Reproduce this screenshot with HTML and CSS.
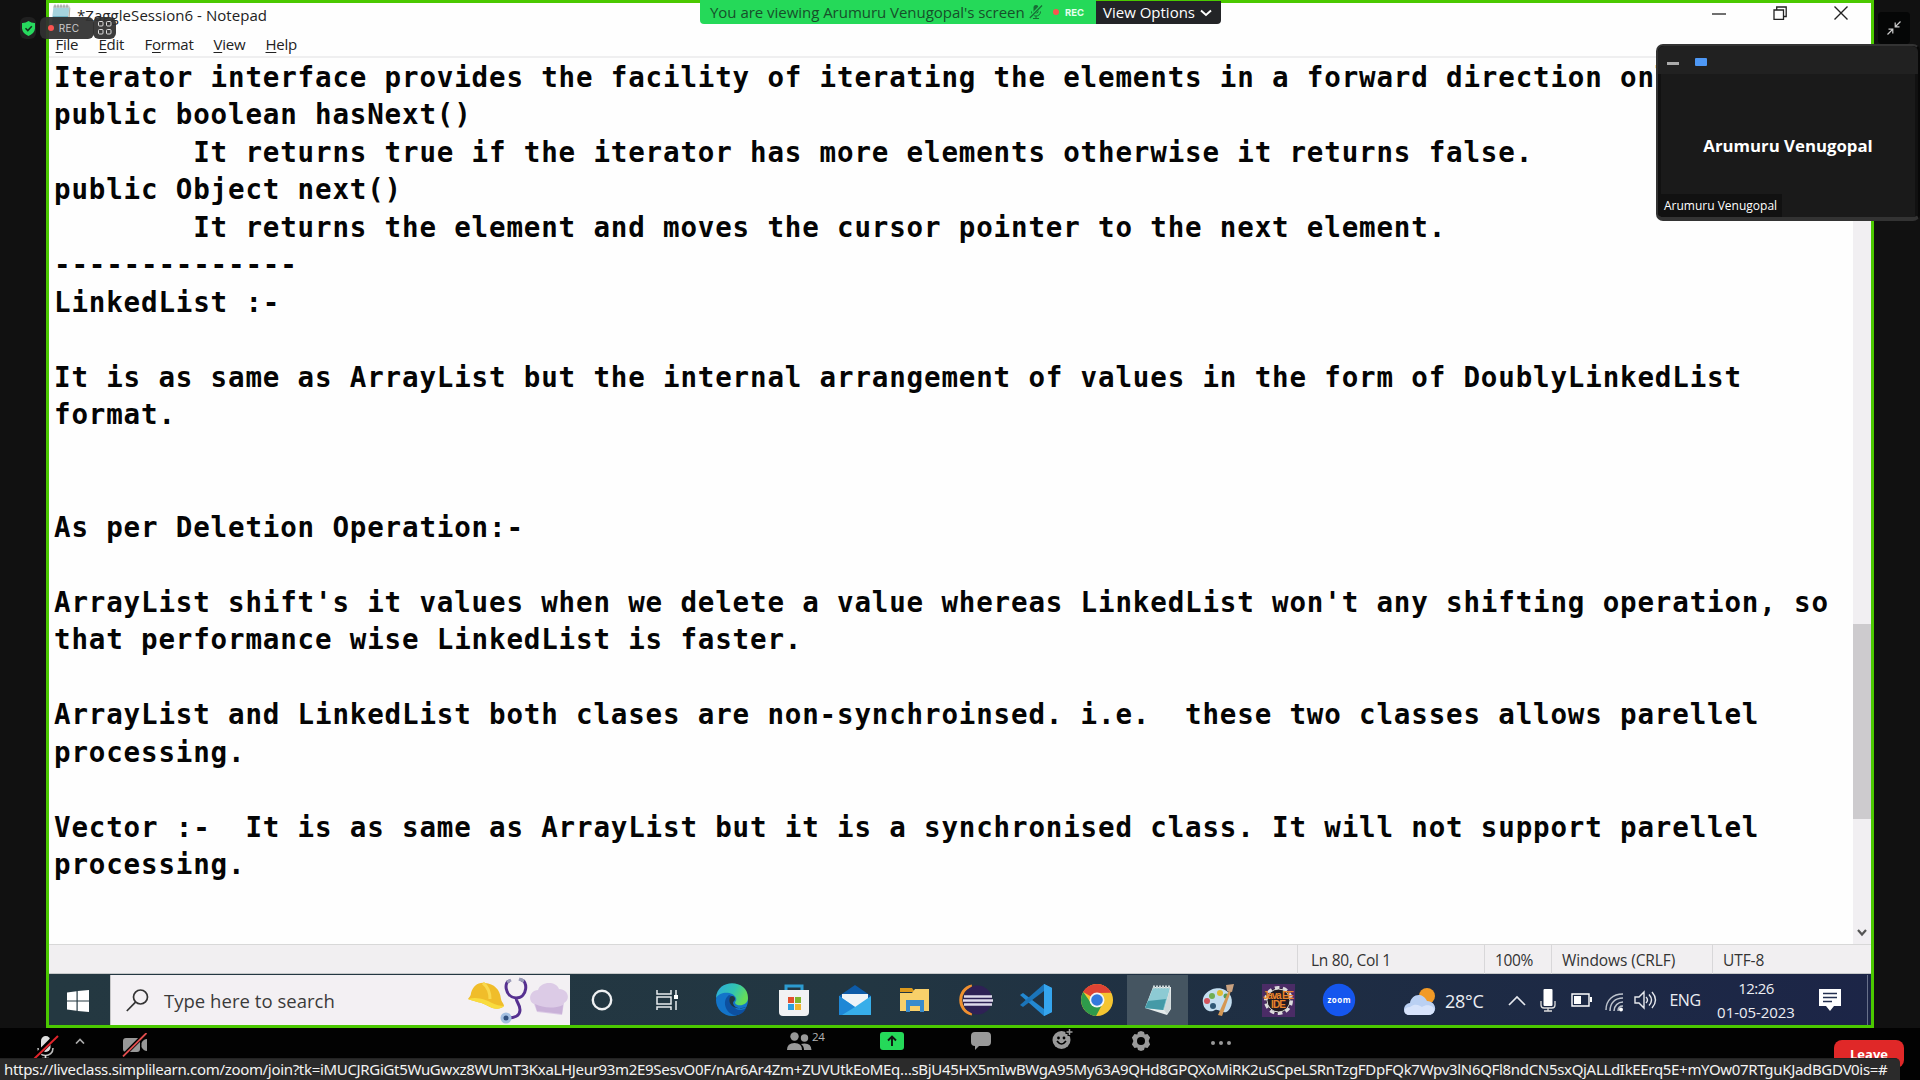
FILE: index.html
```html
<!DOCTYPE html>
<html lang="en">
<head>
<meta charset="utf-8">
<title>Shared screen</title>
<link rel="stylesheet" href="styles.css">
</head>
<body>
<div class="app">
  <main class="stage">
    <section class="share">
      <header class="titlebar">
        <svg class="doc-icon" width="20" height="20" viewBox="0 0 20 20"><path d="M2.500 2.500h16L16.500 20H.5z" fill="#a5d3dd"/><path d="M2 12h15l-.5 8H1z" fill="#6fb3c3"/><path d="M2.500 1.500h16l-.3 2.500h-16z" fill="#c9cfcf"/><path d="M4 .5v3M7 .5v3M10 .5v3M13 .5v3M16 .5v3" stroke="#8b8f90" stroke-width="1"/><path d="M18.500 3l.8 1-1 16h-1.800z" fill="#b9b0a0"/></svg>
        <span class="title">*ZaggleSession6 - Notepad</span>
        <div class="win-buttons">
          <svg width="14" height="14" viewBox="0 0 14 14"><path d="M0 8h14" stroke="#333" stroke-width="1.4"/></svg>
          <svg width="14" height="14" viewBox="0 0 14 14" fill="none" stroke="#222" stroke-width="1.3"><path d="M1 4h9.500v9.300H1z"/><path d="M3.700 4V1h9.500v9.500h-2.700"/></svg>
          <svg width="14" height="14" viewBox="0 0 14 14"><path d="M.5.5l13 13M13.500.5l-13 13" stroke="#222" stroke-width="1.400"/></svg>
        </div>
      </header>
      <nav class="menubar">
        <span class="m-file"><u>F</u>ile</span><span class="m-edit"><u>E</u>dit</span><span class="m-format">F<u>o</u>rmat</span><span class="m-view"><u>V</u>iew</span><span class="m-help"><u>H</u>elp</span>
      </nav>
      <div class="editor">
        <pre class="text">Iterator interface provides the facility of iterating the elements in a forward direction only.
public boolean hasNext()
        It returns true if the iterator has more elements otherwise it returns false.
public Object next()
        It returns the element and moves the cursor pointer to the next element.
--------------
LinkedList :-

It is as same as ArrayList but the internal arrangement of values in the form of DoublyLinkedList
format.


As per Deletion Operation:-

ArrayList shift's it values when we delete a value whereas LinkedList won't any shifting operation, so
that performance wise LinkedList is faster.

ArrayList and LinkedList both clases are non-synchroinsed. i.e.  these two classes allows parellel
processing.

Vector :-  It is as same as ArrayList but it is a synchronised class. It will not support parellel
processing.</pre>
        <div class="scrollbar"><div class="thumb"></div>
          <svg class="down" width="10" height="8" viewBox="0 0 10 8"><path d="M1 1l4 4.500L9 1" fill="none" stroke="#555" stroke-width="2.200"/></svg>
        </div>
      </div>
      <footer class="statusbar">
        <span class="s-pos">Ln 80, Col 1</span><span class="s-zoom">100%</span><span class="s-eol">Windows (CRLF)</span><span class="s-enc">UTF-8</span>
      </footer>
      <div class="taskbar">
        <div class="start"><svg width="22" height="22" viewBox="0 0 22 22" fill="#fff"><path d="M0 2.500 9.500 1.200v9.300H0zM10.700 1 22 0v10.500H10.700zM0 11.600h9.500v9.200L0 19.500zM10.700 11.600H22V22l-11.300-1.100z"/></svg></div>
        <div class="search">
          <svg class="lens" width="23" height="23" viewBox="0 0 23 23" fill="none" stroke="#333" stroke-width="1.700"><circle cx="14.500" cy="8" r="7"/><path d="M9.500 13.200.8 22"/></svg>
          <span>Type here to search</span>
          <svg class="jobs" width="102" height="48" viewBox="0 0 102 48">
            <path d="M0 22C1 20 3 19 3 16 5 9 10 5 17 6c9 1 15 6 16 16 0 2 3 5 3 7-4 4-11 3-16 0-6-4-13-4-20-7z" fill="#f0bd2a"/><path d="M0 22c9-3 19 1 24 4 4 2 8 3 12 3-4 4-11 3-16 0-6-4-13-4-20-7z" fill="#f9dc3e"/><path d="M15 6c5 4 7 9 7 16" fill="none" stroke="#f9d94e" stroke-width="3"/>
            <path d="M42 4c-6-1-6 16 6 17 12 0 12-18 5-18M48 21c1 6 4 6 4 12 0 6-6 8-12 8" fill="none" stroke="#563090" stroke-width="3"/><path d="M39 5l4-2M51 2l5 2" stroke="#999ab7" stroke-width="3"/><circle cx="38" cy="41" r="5.500" fill="#a3bfe0"/><circle cx="38" cy="41" r="2.500" fill="#31517f"/>
            <path d="M66 27C59 24 62 13 70 13c3-9 18-9 21-1 9 0 12 10 5 14l-2 12c-8-1-16-2-25-3z" fill="#dccbe6"/><path d="M67 27c8 4 19 5 28 1l-1 9c-8-1-16-2-25-3z" fill="#c9b1d8"/>
          </svg>
        </div>
        <div class="apps">
          <div class="app-tile w64"><svg width="24" height="24" viewBox="0 0 24 24"><circle cx="12" cy="12" r="9.200" fill="none" stroke="#eef0f2" stroke-width="2.400"/></svg></div>
          <div class="app-tile w66"><svg width="24" height="24" viewBox="0 0 24 24" fill="none" stroke="#e8ecee" stroke-width="1.500"><path d="M2 2v4h14V2M2 22v-3h14v3M2 9h14v7H2zM21 2v5M21 13v9"/><path d="M19 7h4v4h-4z" fill="#fff" stroke="none"/></svg></div>
          <div class="app-tile w64"><svg width="34" height="34" viewBox="0 0 34 34"><defs><linearGradient id="eg" x1="0" y1="0" x2="1" y2=".4"><stop offset="0" stop-color="#2ba9e0"/><stop offset=".6" stop-color="#32c5b0"/><stop offset="1" stop-color="#65dc59"/></linearGradient></defs><circle cx="17" cy="17" r="16" fill="#1374c9"/><path d="M1 15C2-5 33-4 33 15c0 8-11 9-13 5 0-2 2-2 1-5C18 8 5 8 1 15z" fill="url(#eg)"/><path d="M14 12c-8 6-3 18 5 20 5 1 10-2 12-7-5 4-12 2-13-4-1-2 0-3 1-3-1-3 0-5-5-6z" fill="#0d50a0"/><path d="M15 14c-2 5 1 10 7 11 4 1 8-1 9-1-5 3-12 1-13-4 0-2 2-2 2-4 0-3-3-4-5-2z" fill="#223540"/></svg></div>
          <div class="app-tile"><svg width="32" height="34" viewBox="0 0 32 34"><path d="M8 9V3h16v6" fill="none" stroke="#2c9bd0" stroke-width="3"/><path d="M1 7h30v22q0 4-4 4H5q-4 0-4-4z" fill="#f1f2f3"/><path d="M10 14h6v6h-6z" fill="#e3502f"/><path d="M17 14h6v6h-6z" fill="#7fb52d"/><path d="M10 21h6v6h-6z" fill="#2b9fe0"/><path d="M17 21h6v6h-6z" fill="#efb52c"/></svg></div>
          <div class="app-tile"><svg width="34" height="32" viewBox="0 0 34 32"><path d="M1 12 17 1l16 11v9H1z" fill="#0d5ba9"/><path d="M4 10h26v9L17 24 4 19z" fill="#eef3f8"/><path d="M1 12l16 11 16-11v19H1z" fill="#37aee9"/><path d="M1 12l16 11L4 31H1z" fill="#1e87d6"/></svg></div>
          <div class="app-tile"><svg width="32" height="28" viewBox="0 0 32 28"><path d="M1 2h12l3 4H1z" fill="#dc9a1d"/><path d="M1 7h12l3-4h14v22H1z" fill="#f8d06a"/><path d="M7 26V14h18v12h-4v-6H11v6z" fill="#3a8ccc"/></svg></div>
          <div class="app-tile"><svg width="34" height="32" viewBox="0 0 34 32"><path d="M13 2C-2 5-2 27 13 30" fill="none" stroke="#ef9030" stroke-width="3"/><circle cx="18.500" cy="16" r="14.500" fill="#2e2155"/><path d="M5 12.500h28M4 16.500h30M5 20.500h28" stroke="#ddd9ea" stroke-width="2.300"/></svg></div>
          <div class="app-tile"><svg width="34" height="34" viewBox="0 0 34 34"><path d="M25 1 33 5v24l-8 4z" fill="#35a5ee"/><path d="M1 12l3-2 21 16v7z" fill="#2389d2"/><path d="M1 22l3 2L25 8V1z" fill="#1b75ba"/><path d="M25 1l8 4v24l-8 4z" fill="#35a5ee"/></svg></div>
          <div class="app-tile"><svg width="34" height="34" viewBox="0 0 34 34"><circle cx="17" cy="17" r="16" fill="#f5c531"/><path d="M17 17 3.200 9A16 16 0 0 1 31 9.500L17 10z" fill="#df4334"/><path d="M3.200 9A16 16 0 0 0 16 33l7-13-12 0z" fill="#2e9a4b"/><path d="M3.200 9A16 16 0 0 1 31 9.500H17z" fill="#df4334"/><circle cx="17" cy="17" r="7.500" fill="#f4f5f6"/><circle cx="17" cy="17" r="5.800" fill="#3479dd"/></svg></div>
          <div class="app-tile active"><svg width="32" height="32" viewBox="0 0 32 32"><path d="M11 3h18v22l-4 6L3 24z" fill="#e6ecec"/><path d="M11 4h17l-6 22L3 24z" fill="#8dcad3"/><path d="M6 17l18-2-3 11L3 24z" fill="#459aa7"/><path d="M11 3h18" stroke="#c9d6d8" stroke-width="3" stroke-dasharray="2 1"/><path d="M28 5l1 19-4 6-3-4z" fill="#cfd8d9"/></svg></div>
          <div class="app-tile"><svg width="34" height="34" viewBox="0 0 34 34"><path d="M2 20C0 9 15 2 24 7c8 4 9 15 3 21-5 4-9-3-13-1-4 3-11 1-12-7z" fill="#c4def0"/><circle cx="11" cy="13" r="3" fill="#70ae54"/><circle cx="19" cy="10" r="3" fill="#e0bb35"/><circle cx="6" cy="18" r="3" fill="#d3545c"/><circle cx="12" cy="23" r="3" fill="#315977"/><circle cx="25" cy="13" r="2.500" fill="#549a55"/><path d="M28 7l2 1-9 25-4-1z" fill="#d59854"/><path d="M25 2l8-1-2 8-5-1z" fill="#caa280"/></svg></div>
          <div class="app-tile"><svg width="33" height="33" viewBox="0 0 33 33"><path d="M0 0h33v33H0z" fill="#4b2c66"/><circle cx="16.500" cy="16.500" r="12.500" fill="#211b22" stroke="#ddd" stroke-width="4" stroke-dasharray="4.500 3.350"/><circle cx="16.500" cy="16.500" r="11.500" fill="#211b22" stroke="#ddd" stroke-width="1"/><text x="1" y="15" class="jee" textLength="31">Java EE</text><text x="9" y="24" class="jee" textLength="15">IDE</text></svg></div>
          <div class="app-tile"><svg width="34" height="34" viewBox="0 0 34 34"><circle cx="17" cy="17" r="16.200" fill="#1556ee"/><text x="5.500" y="19.500" class="zm" textLength="23">zoom</text></svg></div>
        </div>
        <div class="tray">
          <svg width="34" height="30" viewBox="0 0 34 30"><circle cx="25" cy="9" r="8" fill="#f29a26"/><path d="M8 28C0 28 0 17 8 16c1-8 12-12 17-2 7 0 10 7 7 11-2 3-5 3-7 3z" fill="#bad0f3"/><path d="M8 28C0 28 1 20 8 20c5-4 9-2 12 0 5-4 14-1 12 5-2 3-5 3-7 3z" fill="#d7e3fb"/></svg>
          <span class="temp">28°C</span>
          <svg width="18" height="11" viewBox="0 0 18 11"><path d="M1 10l8-8 8 8" fill="none" stroke="#e6e8ee" stroke-width="1.700"/></svg>
          <svg width="16" height="23" viewBox="0 0 16 23"><rect x="3.500" y="0" width="9" height="17" rx="1" fill="#fff"/><path d="M1 12v4q0 3 3 3h8q3 0 3-3v-4M8 19v3M4 22h8" fill="none" stroke="#ddd" stroke-width="1.300"/></svg>
          <svg width="21" height="14" viewBox="0 0 21 14"><path d="M1 1h17v12H1z" fill="none" stroke="#fff" stroke-width="1.400"/><path d="M3 3h7v8H3zM19 4h2v5h-2z" fill="#fff"/></svg>
          <svg class="wifi" width="19" height="20" viewBox="0 0 19 20" fill="none" stroke="#bcc2cc" stroke-width="1.500"><path d="M1 18C1 8 8 2 18 2M5 19C5 11 10 6 18 6M9 19c0-5 4-9 9-9M13 19c0-3 2-5 5-5"/><circle cx="16" cy="17.500" r="2" fill="#fff" stroke="none"/></svg>
          <svg width="24" height="20" viewBox="0 0 24 20" fill="none" stroke="#e5e7ec" stroke-width="1.400"><path d="M1 7h4l5-5v16l-5-5H1zM12 7q3 3 0 6M15 4.500q5 5.500 0 11M18 2q7 8 0 16"/></svg>
          <span class="lang">ENG</span>
          <div class="clock"><span>12:26</span><span class="date">01-05-2023</span></div>
          <svg class="note" width="22" height="22" viewBox="0 0 22 22"><path d="M0 0h22v17h-7l-4 5-4-5H0z" fill="#fff"/><path d="M4 4.500h14M4 8.500h14M4 12.500h9" stroke="#243050" stroke-width="1.300"/></svg>
          <i class="desk"></i>
        </div>
      </div>
    </section>
  </main>
  <div class="controls">
    <svg class="c-mic" width="26" height="26" viewBox="0 0 26 26"><rect x="8" y="2" width="9.500" height="16" rx="4.700" fill="#dedede"/><path d="M5 14c0 10 15 10 15 0" fill="none" stroke="#bbb" stroke-width="1.600"/><path d="M12.500 21v4M9 24.500h7" stroke="#ddd" stroke-width="1.600"/><path d="M1 24 24 1" stroke="#000" stroke-width="5"/><path d="M1 25 25 2" stroke="#e0242b" stroke-width="2"/></svg>
    <svg class="c-caret" width="10" height="6" viewBox="0 0 10 6"><path d="M1 5.500l4-4 4 4" fill="none" stroke="#aaa" stroke-width="1.700"/></svg>
    <svg class="c-cam" width="26" height="24" viewBox="0 0 26 24"><rect x="1" y="5" width="17" height="14" rx="3" fill="#989898"/><path d="M19.500 10q2-4 5.500-4v12q-3.500 0-5.500-4z" fill="#989898"/><path d="M1 23 24 0" stroke="#000" stroke-width="4"/><path d="M1 23.500 24.500 0" stroke="#df4d4d" stroke-width="1.800"/></svg>
    <svg class="c-people" width="25" height="18" viewBox="0 0 25 18" fill="#999"><circle cx="7.500" cy="4.500" r="4.200"/><path d="M0 18q0-7 7.500-7T15 18z"/><circle cx="17.500" cy="6" r="3.700"/><path d="M17 18q0-4-3-6 10-2 10.500 6z"/></svg>
    <span class="count">24</span>
    <svg class="c-share" width="24" height="18" viewBox="0 0 24 18"><rect width="24" height="18" rx="3" fill="#25d959"/><path d="M12 14V5M8 8.500l4-4 4 4" fill="none" stroke="#111" stroke-width="1.900"/></svg>
    <svg class="c-chat" width="20" height="18" viewBox="0 0 20 18"><path d="M4 0h12q4 0 4 4v6q0 4-4 4H8l-4 4v-4q-4 0-4-4V4q0-4 4-4z" fill="#999"/></svg>
    <svg class="c-emoji" width="22" height="22" viewBox="0 0 22 22"><circle cx="9.500" cy="12" r="9" fill="#999"/><circle cx="6.500" cy="10" r="1.400"/><circle cx="12" cy="10" r="1.400"/><path d="M5 13q4.500 6 9 0" fill="none" stroke="#000" stroke-width="1.600"/><path d="M17.500 0v8M13.500 4h8" stroke="#000" stroke-width="4"/><path d="M17.500 1v6M14.500 4h6" stroke="#999" stroke-width="1.500"/></svg>
    <svg class="c-gear" width="20" height="20" viewBox="0 0 20 20"><path d="M10 0l3 1 .7 2.500L16.500 3l2.600 3.500L17.600 10l1.500 3.500L16.500 17l-2.800-.5L13 19l-3 1-3-1-.7-2.500-2.800.5L.9 13.500 2.400 10 .9 6.500 3.500 3l2.800.5L7 1z" fill="#999"/><circle cx="10" cy="10" r="4" fill="#020202"/></svg>
    <svg class="c-more" width="20" height="6" viewBox="0 0 20 6" fill="#999"><circle cx="2" cy="3" r="2"/><circle cx="10" cy="3" r="2"/><circle cx="18" cy="3" r="2"/></svg>
    <button class="leave">Leave</button>
  </div>

  <div class="badge shield"><svg width="13" height="15" viewBox="0 0 13 15"><path d="M6.500 0q3 2.200 6.500 2v5.500q-.5 5-6.500 7.500-6-2.500-6.500-7.500V2q3.500.2 6.500-2z" fill="#27d95e"/><path d="M3.500 7.300l2.300 2.300 4-4.300" fill="none" stroke="#14301d" stroke-width="1.500"/></svg></div>
  <div class="badge rec"><i class="dot"></i><span>REC</span></div>
  <div class="badge views"><svg width="14" height="14" viewBox="0 0 14 14" fill="none" stroke="#ddd"><rect x=".5" y=".5" width="4.500" height="4.500" rx="1"/><rect x="8.500" y=".5" width="4.500" height="4.500" rx="1"/><rect x=".5" y="8.500" width="4.500" height="4.500" rx="1"/><rect x="8.500" y="8.500" width="4.500" height="4.500" rx="1"/></svg></div>

  <div class="banner">
    <div class="viewing"><span class="who">You are viewing Arumuru Venugopal's screen</span>
      <svg width="14" height="14" viewBox="0 0 14 14"><rect x="4.500" y="0" width="5" height="8.500" rx="2.500" fill="#176c35"/><path d="M2.500 6.500c0 6 9 6 9 0M7 11v2.500M4 13.500h6" fill="none" stroke="#176c35"/><path d="M.8 12.500 12.500.5" stroke="#25d959" stroke-width="3"/><path d="M.8 13 13 .5" stroke="#176c35" stroke-width="1.200"/></svg>
      <i class="dot"></i><b>REC</b></div>
    <div class="options"><span>View Options</span><svg width="12" height="8" viewBox="0 0 12 8"><path d="M1 1.500l5 4.500 5-4.500" fill="none" stroke="#fff" stroke-width="1.900"/></svg></div>
  </div>

  <div class="shrink"><svg width="14" height="14" viewBox="0 0 14 14" fill="none" stroke="#ccc" stroke-width="1.200"><path d="M13.500.5 8.500 5.500M8.200 1.500v4.300h4.300M.5 13.500l5-5M1.500 8.200h4.300v4.300"/></svg></div>

  <aside class="speaker">
    <div class="speaker-head"><i class="min"></i><i class="mode"></i></div>
    <div class="video"><strong>Arumuru Venugopal</strong><span class="label">Arumuru Venugopal</span></div>
  </aside>

  <div class="link-hint"><span>https://liveclass.simplilearn.com/zoom/join?tk=iMUCJRGiGt5WuGwxz8WUmT3KxaLHJeur93m2E9SesvO0F/nAr6Ar4Zm+ZUVUtkEoMEq…sBjU45HX5mIwBWgA95My63A9QHd8GPQXoMiRK2uSCpeLSRnTzgFDpFQk7Wpv3lN6QFl8ndCN5sxQjALLdIkEErq5E+mYOw07RTguKJadBGDV0is=#</span></div>
</div>
</body>
</html>
```
FILE: styles.css
```css
* { box-sizing: border-box; }
body { margin: 0; background: #020202; font-family: "Open Sans", "Noto Sans", sans-serif; overflow: hidden; }
svg { display: block; flex: none; }
.app { position: relative; width: 1920px; height: 1080px; display: flex; flex-direction: column; overflow: hidden; }
.stage { height: 1028px; padding: 0 46px; background: #111; flex: none; }
.share { height: 1028px; border: 3px solid #4bc900; background: #fefefe; display: flex; flex-direction: column; }

.titlebar { height: 28px; display: flex; align-items: flex-start; color: #222; }
.doc-icon { margin: 1px 0 0 2px; }
.title { margin-left: 6px; font-size: 15px; line-height: 24px; letter-spacing: .06px; white-space: nowrap; }
.win-buttons { margin: 3px 23px 0 auto; display: flex; gap: 47px; }
.menubar { height: 27px; border-bottom: 2px solid #efeff0; display: grid; grid-template-columns: 43px 46px 69px 52px auto; padding-left: 6.500px; color: #222; font-size: 15px; line-height: 26px; letter-spacing: -.25px; }
.menubar u { text-underline-offset: 2px; }

.editor { height: 886px; display: flex; justify-content: space-between; }
.text { margin: 0; padding: 1px 0 0 5px; width: 1800px; overflow: hidden; font: bold 27.500px/37.490px "DejaVu Sans Mono", monospace; letter-spacing: .844px; color: #050505; }
.scrollbar { width: 18px; background: #f1eff2; display: flex; flex-direction: column; align-items: center; }
.thumb { margin-top: 566px; width: 18px; height: 195px; background: #cdcbce; }
.down { margin: auto 0 7px; }

.statusbar { height: 30px; border-top: 1px solid #d8d8d8; border-bottom: 1px solid #c7c9ca; background: #f1eff1; display: grid; grid-template-columns: 187px 67px 161px 159px; justify-content: end; color: #333; font-size: 15.500px; line-height: 30px; letter-spacing: -.1px; }
.statusbar span { border-left: 1px solid #d8d7d9; white-space: nowrap; }
.s-pos { padding-left: 13px; letter-spacing: -.28px; }
.s-zoom, .s-enc, .s-eol { padding-left: 10px; }
.s-zoom { letter-spacing: -.4px; }

.taskbar { height: 51px; padding-top: 1px; display: flex; background: linear-gradient(90deg, #243841 0%, #223642 45%, #1e2d43 70%, #1c2547 100%); }
.start { width: 61px; display: grid; place-items: center; padding: 1px 3px 0 0; }
.search { width: 460px; background: #f3f0f3; border-left: 1px solid #c7c7c8; display: flex; align-items: center; color: #3a3a3a; font-size: 18.500px; padding-top: 1px; }
.lens { margin: 0 15px; }
.search span { white-space: nowrap; letter-spacing: .03px; }
.jobs { margin-left: auto; margin-right: 0; }
.apps { display: flex; }
.app-tile { width: 60.550px; display: grid; place-items: center; }
.w64 { width: 64px; } .w66 { width: 66px; }
.active { background: #455561; }
.jee { font: bold 10px "Liberation Sans", sans-serif; fill: #e9842c; }
.zm { font: bold 8px "Open Sans", sans-serif; fill: #fff; }
.tray { margin-left: auto; display: grid; grid-template-columns: 44px 60px 24px 38px 29px 36px 28px 50px 92px 56px 13px; align-items: center; justify-items: center; color: #eceef3; font-size: 16px; letter-spacing: -.5px; }
.tray > :first-child { justify-self: start; margin: 4px 0 0 1px; }
.temp { justify-self: start; font-size: 18px; padding-top: 1px; letter-spacing: -.3px; }
.wifi { margin-top: 3px; }
.clock { display: flex; flex-direction: column; align-items: center; line-height: 24px; font-size: 15px; }
.date { letter-spacing: -.05px; }
.desk { width: 1px; height: 50px; background: #68718a; margin-left: 6px; }

.controls { height: 52px; display: flex; align-items: flex-start; background: #020202; }
.c-mic { margin: 6px 0 0 33px; }
.c-caret { margin: 10px 0 0 16px; }
.c-cam { margin: 5px 0 0 37px; }
.c-people { margin: 4px 0 0 639px; }
.count { width: 14px; font-size: 11.500px; line-height: 18px; color: #b4b4b4; letter-spacing: -.3px; }
.c-share { margin: 4px 0 0 54px; }
.c-chat { margin: 4px 0 0 67px; }
.c-emoji { margin: 0 0 0 61px; }
.c-gear { margin: 3px 0 0 57px; }
.c-more { margin: 12px 0 0 60px; }
.leave { margin: 12px 16px 0 auto; width: 70px; height: 28px; border: 0; border-radius: 8px; background: #e02828; color: #fff; font: bold 13px/28px "Open Sans", sans-serif; padding: 0; }

.badge { position: absolute; top: 17px; height: 22px; background: rgba(49,49,49,.94); border-radius: 6px; display: flex; align-items: center; justify-content: center; }
.shield { left: 20px; width: 16px; background: #202020; }
.rec { left: 40px; width: 54px; color: #ccc; font: 10px "Inter", sans-serif; gap: 5px; padding-right: 7px; letter-spacing: .2px; }
.views { left: 93px; width: 23px; }
.dot { width: 6px; height: 6px; border-radius: 50%; background: #fb5350; }

.banner { position: absolute; left: 700px; top: 0; display: flex; height: 24px; font-size: 15px; line-height: 25px; white-space: nowrap; }
.viewing { width: 396px; background: #25d959; border-radius: 0 0 0 4px; color: #174f2a; display: flex; align-items: center; padding-left: 10px; }
.who { width: 315px; letter-spacing: -.03px; }
.viewing svg { margin-left: 4px; }
.viewing .dot { margin-left: 10px; }
.viewing b { margin-left: 6px; color: #e8ffee; font: bold 9.500px "Inter", sans-serif; }
.options { width: 125px; height: 23px; margin-top: 1px; background: #232427; border-radius: 0 0 4px 0; color: #fff; display: flex; align-items: center; padding-left: 7px; gap: 5px; }

.shrink { position: absolute; left: 1878px; top: 12px; width: 32px; height: 32px; border-radius: 4px; background: #050606; display: grid; place-items: center; }

.speaker { position: absolute; left: 1656px; top: 44px; width: 264px; height: 177px; border: 2px solid #333; border-right-color: #080808; border-bottom-width: 4px; border-radius: 7px; background: #111; display: flex; flex-direction: column; padding: 0 3px; }
.speaker-head { height: 28px; margin: 0 -3px; border-radius: 6px 6px 0 0; background: #212121; display: flex; align-items: center; padding-left: 9px; }
.min { width: 12px; height: 3px; background: #aaa; margin-top: 7px; }
.mode { width: 12px; height: 8px; border-radius: 1px; background: #4e98f5; margin: 4px 0 0 16px; }
.video { flex: 1; position: relative; background: #1a1a1a; display: grid; place-items: center; color: #fff; }
.video strong { font-size: 16.800px; font-weight: 700; line-height: 20px; white-space: nowrap; }
.label { position: absolute; left: 0; bottom: 0; height: 23px; width: 121px; background: #111; font-size: 12px; line-height: 24px; padding-left: 3px; white-space: nowrap; }

.link-hint { position: absolute; left: 0; top: 1058px; width: 1900px; height: 22px; border-top: 1px solid #222; border-radius: 0 5px 0 0; background: #2b2b2b; color: #f3f3f3; font: 15px/21px "Noto Sans", sans-serif; letter-spacing: -.32px; padding-left: 4px; white-space: nowrap; overflow: hidden; }
```
